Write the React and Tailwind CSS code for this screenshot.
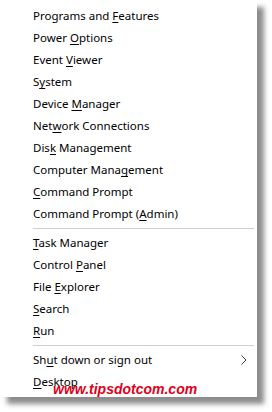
import React from 'react';

/* Win+X menu entries; [before, accessKey, after] so the access key gets underlined */
const groups = [
	[
		['Programs and ', 'F', 'eatures'],
		['Power ', 'O', 'ptions'],
		['Event ', 'V', 'iewer'],
		['S', 'y', 'stem'],
		['Device ', 'M', 'anager'],
		['Net', 'w', 'ork Connections'],
		['Dis', 'k', ' Management'],
		['Computer Mana', 'g', 'ement'],
		['', 'C', 'ommand Prompt'],
		['Command Prompt (', 'A', 'dmin)'],
	],
	[
		['', 'T', 'ask Manager'],
		['Control ', 'P', 'anel'],
		['File ', 'E', 'xplorer'],
		['', 'S', 'earch'],
		['', 'R', 'un'],
	],
	[
		['Sh', 'u', 't down or sign out', true],
		['', 'D', 'esktop'],
	],
];

function MenuItem({ item }) {
	const [pre, key, post, submenu] = item;
	return (
		<div className="h-[22px] flex items-center pl-[33px] pr-[10px] text-[11.5px] text-black">
			<span className="flex-1 whitespace-nowrap">
				{pre}
				<span className="underline underline-offset-2">{key}</span>
				{post}
			</span>
			{submenu && (
				<svg width="6" height="10" viewBox="0 0 6 10">
					<path d="M0.5 0.5 L5 5 L0.5 9.5" fill="none" stroke="#444" strokeWidth="1" />
				</svg>
			)}
		</div>
	);
}

export default function App() {
	return (
		<div className="w-[272px] h-[412px] bg-white relative" style={{ fontFamily: '"Noto Sans", "Open Sans", sans-serif' }}>
			<div className="w-[257px] h-[397px] bg-white pt-[5px] shadow-[7px_7px_5px_rgba(0,0,0,0.45)] flex flex-col">
				{groups.map((group, gi) => (
					<div key={gi}>
						{gi > 0 && (
							<div className="h-[7px] flex items-center pl-[33px] pr-[3px]">
								<div className="h-px w-full bg-[#cfcfcf]" />
							</div>
						)}
						{group.map((item, i) => (
							<MenuItem key={i} item={item} />
						))}
					</div>
				))}
			</div>
			<div
				className="absolute left-[53px] top-[379px] text-[14px] font-bold italic text-[#e0001a] whitespace-nowrap"
				style={{ fontFamily: '"Liberation Sans", Arial, sans-serif' }}
			>
				www.tipsdotcom.com
			</div>
		</div>
	);
}
